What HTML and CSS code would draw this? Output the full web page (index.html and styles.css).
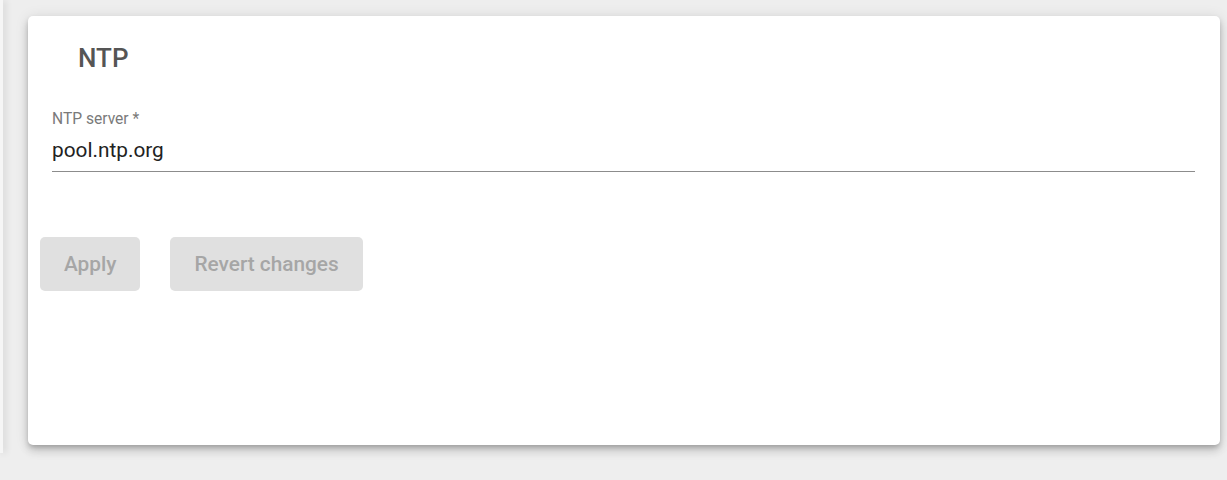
FILE: index.html
```html
<!DOCTYPE html>
<html lang="en">
<head>
<meta charset="utf-8">
<title>NTP</title>
<link rel="stylesheet" href="styles.css">
</head>
<body>
<div class="layout">
  <aside class="side"></aside>
  <main class="main">
    <section class="card">
      <h2 class="title">NTP</h2>
      <div class="field">
        <label class="label">NTP server *</label>
        <div class="value">pool.ntp.org</div>
      </div>
      <div class="actions">
        <button class="btn" disabled>Apply</button>
        <button class="btn" disabled>Revert changes</button>
      </div>
    </section>
  </main>
</div>
</body>
</html>
```

FILE: styles.css
```css
* { box-sizing: border-box; }
html, body { margin: 0; padding: 0; }
body {
  background: #eeeeee;
  font-family: Roboto, "Liberation Sans", Arial, sans-serif;
  width: 1227px;
  height: 480px;
  overflow: hidden;
}
.layout {
  display: flex;
  align-items: flex-start;
}
.side {
  width: 3px;
  height: 453px;
  background: #f6f6f6;
  box-shadow: 2px 0 7px rgba(0,0,0,0.16);
  flex: none;
}
.main {
  flex: 1;
  padding: 16px 7px 0 25px;
}
.card {
  width: 1192px;
  height: 429px;
  background: #fff;
  border-radius: 5px;
  box-shadow: 0 3px 5px -1px rgba(0,0,0,0.2), 0 6px 10px 0 rgba(0,0,0,0.14), 0 1px 14px 0 rgba(0,0,0,0.1);
  padding-top: 27px;
}
.title {
  margin: 0 0 0 50px;
  font-size: 26px;
  line-height: 31px;
  font-weight: 500;
  color: #555555;
}
.field {
  margin: 37px 25px 0 24px;
  border-bottom: 1px solid #8c8c8c;
  padding-bottom: 8px;
}
.label {
  display: block;
  font-size: 15.6px;
  line-height: 16px;
  color: #7a7a7a;
}
.value {
  margin-top: 11px;
  font-size: 20.8px;
  line-height: 25px;
  color: #222222;
}
.actions {
  display: flex;
  gap: 30px;
  margin: 65px 0 0 12px;
}
.btn {
  height: 54px;
  padding: 0 24px;
  border: none;
  border-radius: 5px;
  background: #e0e0e0;
  color: #a6a6a6;
  font-family: inherit;
  font-size: 20.8px;
  font-weight: 500;
  line-height: 1;
}
```
